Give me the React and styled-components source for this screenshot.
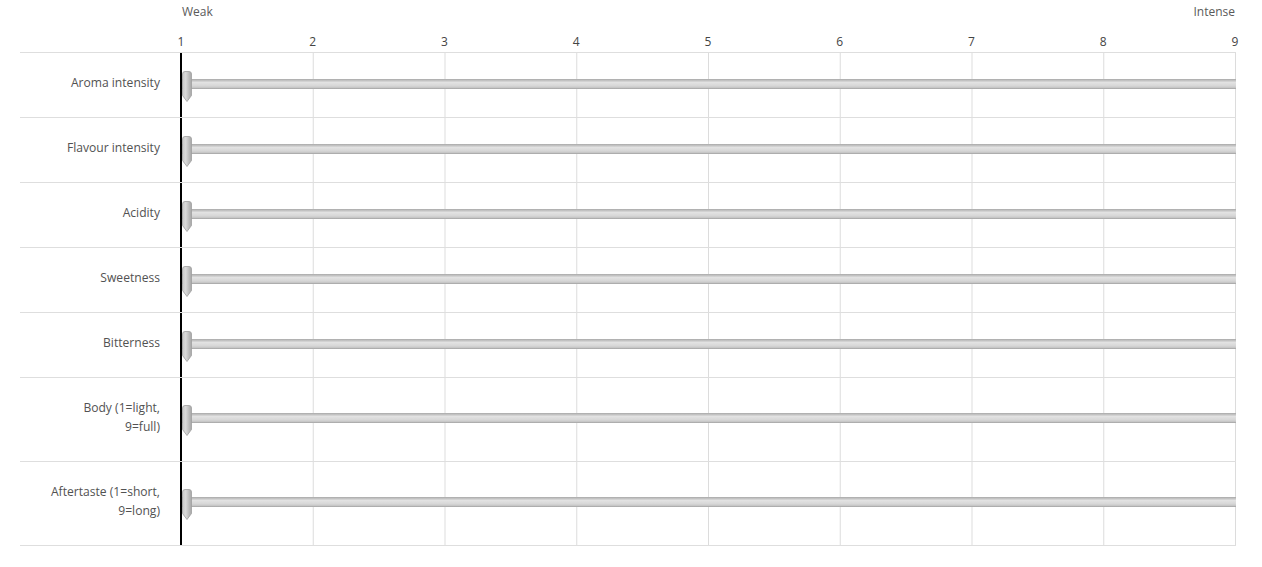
import React from "react";
import styled, { createGlobalStyle } from "styled-components";

const GlobalStyle = createGlobalStyle`
  body {
    margin: 0;
    background: #ffffff;
    font-family: "Open Sans", "Noto Sans", Arial, sans-serif;
    color: #525252;
  }
`;

const Matrix = styled.div`
  width: 1216px;
  padding-left: 20px;
`;

const Header = styled.div`
  display: grid;
  grid-template-columns: 160px 1056px;
  height: 53px;
  border-bottom: 1px solid #dedede;
  box-sizing: border-box;
`;

const Anchors = styled.div`
  display: flex;
  justify-content: space-between;
  padding: 4px 1px 0 2px;
  font-size: 12px;
  line-height: 16px;
  color: #5a5a5a;
`;

const Ticks = styled.div`
  display: flex;
  justify-content: space-between;
  padding: 14px 1px 0 1px;
  font-size: 12px;
  line-height: 16px;
  color: #444;
`;

const Tick = styled.span`
  width: 0;
  display: flex;
  justify-content: center;
  white-space: nowrap;
`;

const Row = styled.div`
  display: grid;
  grid-template-columns: 160px 1056px;
  border-bottom: 1px solid #dedede;
`;

const Label = styled.div`
  padding: 20px 20px 25px 0;
  text-align: right;
  font-size: 12.1px;
  line-height: 19px;
  color: #525252;
`;

const Scale = styled.div`
  display: flex;
  align-items: center;
  border-left: 2px solid #000;
  background-image: linear-gradient(to left, #dcdcdc 1px, transparent 1px);
  background-size: 12.5% 100%;
  background-repeat: repeat-x;
`;

const Track = styled.div`
  position: relative;
  flex: 1;
  height: 10px;
  margin-top: -3px;
  background: linear-gradient(
    #a9a9a9 0%,
    #bdbdbd 12%,
    #e2e2e2 35%,
    #d6d6d6 70%,
    #c4c4c4 88%,
    #9d9d9d 100%
  );
`;

const Handle = styled.svg`
  position: absolute;
  left: 0;
  top: -8px;
  width: 10px;
  height: 31px;
`;

const SliderHandle = ({ id }) => (
  <Handle viewBox="0 0 10 31">
    <defs>
      <linearGradient id={id} x1="0" y1="0" x2="1" y2="0">
        <stop offset="0" stopColor="#c9c9c9" />
        <stop offset="0.35" stopColor="#dadada" />
        <stop offset="1" stopColor="#a6a6a6" />
      </linearGradient>
    </defs>
    <path
      d="M0.5 3 Q0.5 0.5 3 0.5 H7 Q9.5 0.5 9.5 3 V24.5 L5 30.5 L0.5 24.5 Z"
      fill={`url(#${id})`}
      stroke="#a0a0a0"
      strokeWidth="0.8"
    />
  </Handle>
);

const statements = [
  ["Aroma intensity"],
  ["Flavour intensity"],
  ["Acidity"],
  ["Sweetness"],
  ["Bitterness"],
  ["Body (1=light,", "9=full)"],
  ["Aftertaste (1=short,", "9=long)"],
];

export default function App() {
  return (
    <>
      <GlobalStyle />
      <Matrix>
        <Header>
          <div />
          <div>
            <Anchors>
              <span>Weak</span>
              <span>Intense</span>
            </Anchors>
            <Ticks>
              {[1, 2, 3, 4, 5, 6, 7, 8, 9].map((n) => (
                <Tick key={n}>{n}</Tick>
              ))}
            </Ticks>
          </div>
        </Header>
        {statements.map((lines, i) => (
          <Row key={i}>
            <Label>
              {lines.map((l, j) => (
                <div key={j}>{l}</div>
              ))}
            </Label>
            <Scale>
              <Track>
                <SliderHandle id={`handle-grad-${i}`} />
              </Track>
            </Scale>
          </Row>
        ))}
      </Matrix>
    </>
  );
}
